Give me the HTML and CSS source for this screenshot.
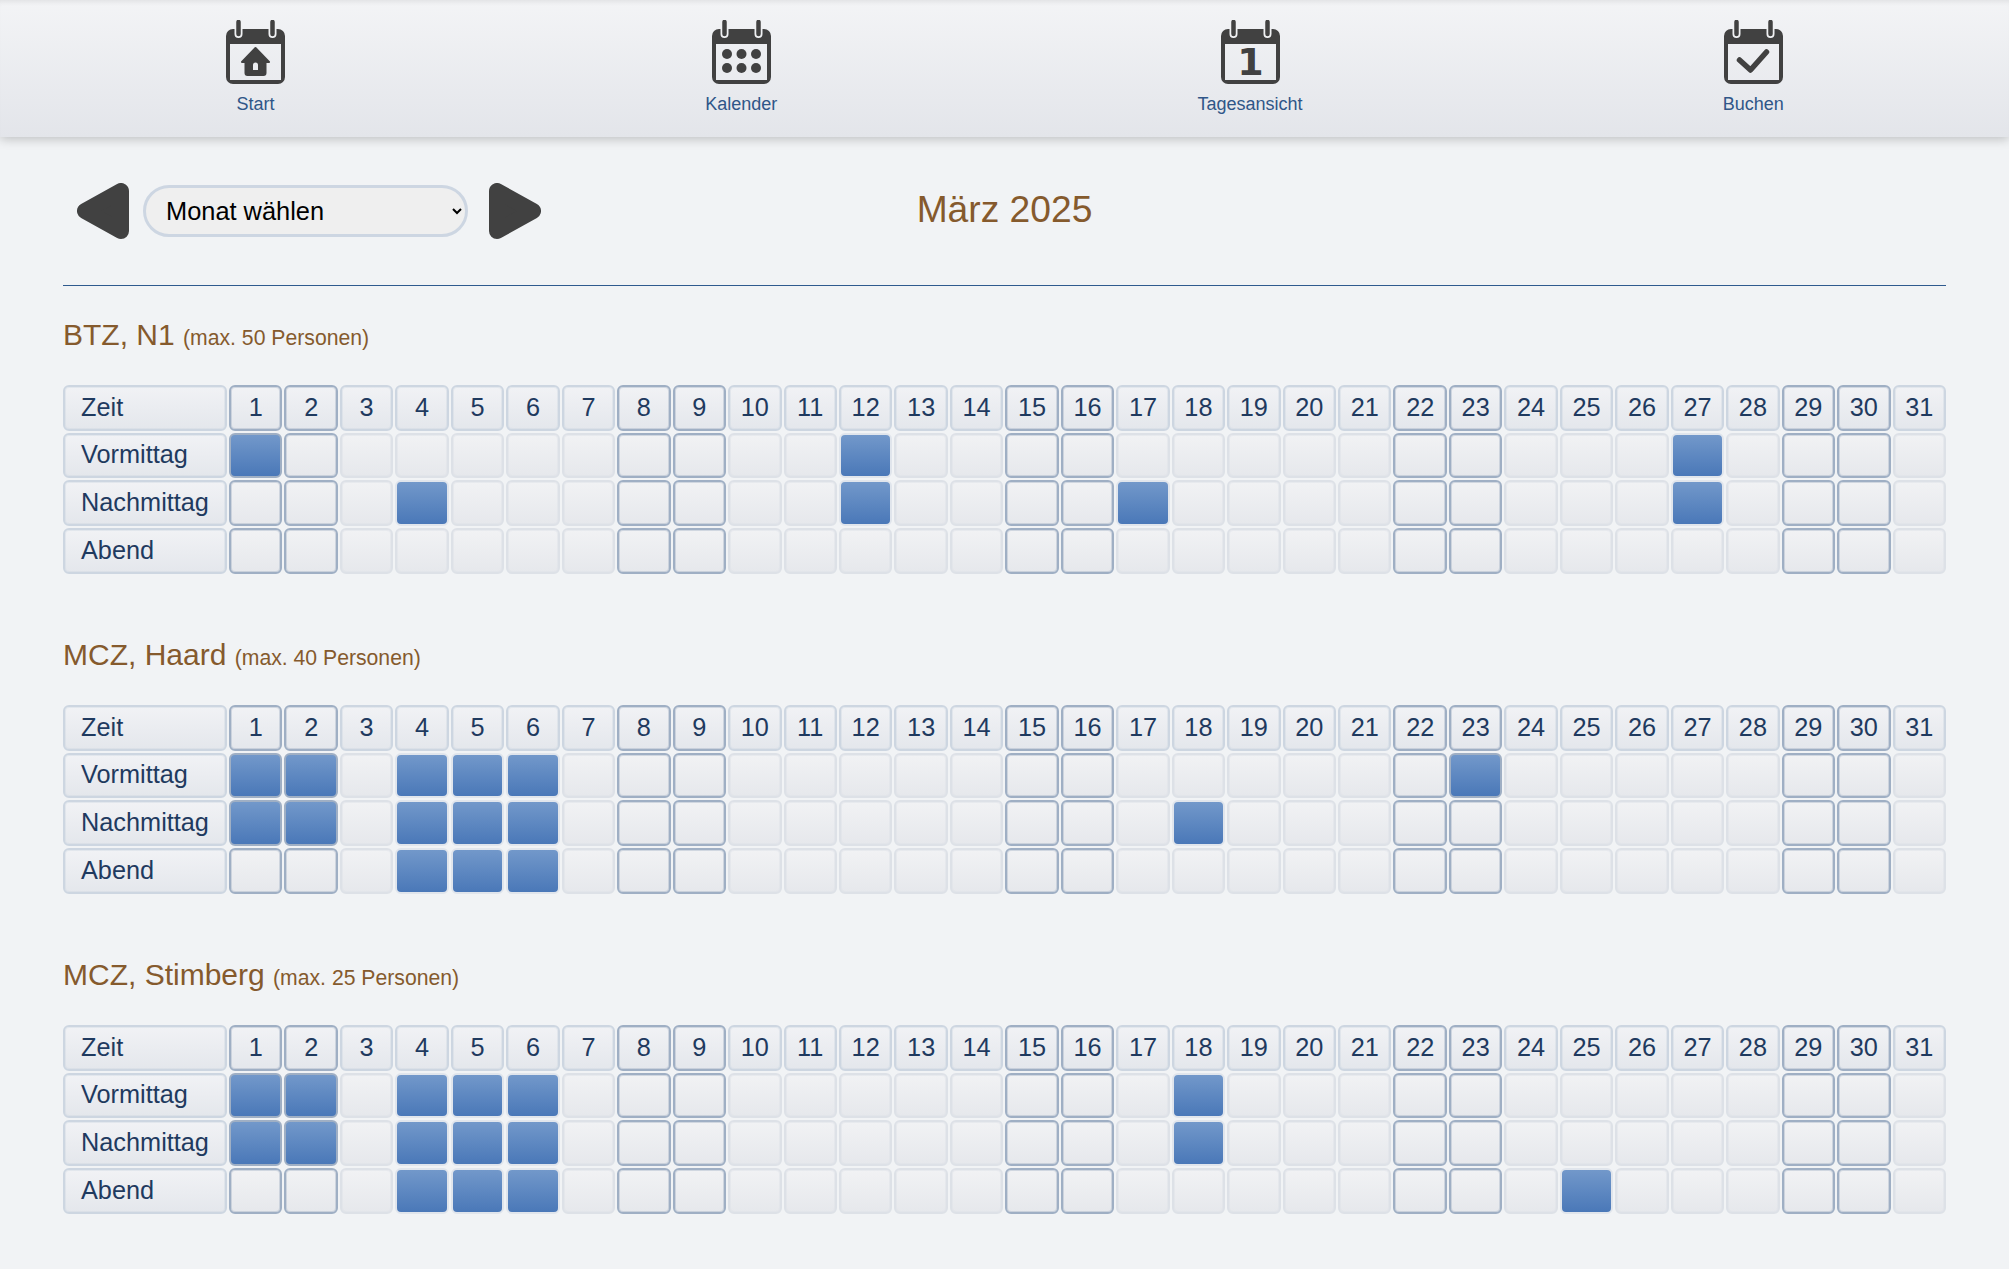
FILE: index.html
```html
<!DOCTYPE html>
<html lang="de">
<head>
<meta charset="UTF-8" />
<meta name="viewport" content="width=device-width, initial-scale=1" />
<title>Belegungsplan</title>
<link rel="stylesheet" href="styles.css">
</head>
<body>
  <svg class="sprite" width="0" height="0">
    <symbol id="cal" viewBox="0 0 59 64">
      <path fill-rule="evenodd" d="M7 9h45a7 7 0 0 1 7 7v41a7 7 0 0 1-7 7H7a7 7 0 0 1-7-7V16a7 7 0 0 1 7-7zM4 24v36h51V24z"/>
      <path class="ring" d="M12.5 2v12M46.5 2v12"/>
      <path class="ring-core" d="M12.5 2v12M46.5 2v12"/>
    </symbol>
  </svg>

  <nav class="topnav">
    <a class="navitem" href="#">
      <svg class="icon" viewBox="0 0 59 64">
        <use href="#cal"/>
        <path fill-rule="evenodd" stroke="#414141" stroke-width="2" stroke-linejoin="round" d="M29.5 28L43 42h-3.500v11a2 2 0 0 1-2 2h-16a2 2 0 0 1-2-2V42H16zM26 45v6h7v-6a3.500 3.500 0 0 0-7 0z"/>
      </svg>
      <span>Start</span>
    </a>
    <a class="navitem" href="#">
      <svg class="icon" viewBox="0 0 59 64">
        <use href="#cal"/>
        <circle cx="15" cy="34" r="5"/><circle cx="29.500" cy="34" r="5"/><circle cx="44" cy="34" r="5"/>
        <circle cx="15" cy="48" r="5"/><circle cx="29.500" cy="48" r="5"/><circle cx="44" cy="48" r="5"/>
      </svg>
      <span>Kalender</span>
    </a>
    <a class="navitem" href="#">
      <svg class="icon" viewBox="0 0 59 64">
        <use href="#cal"/>
        <text class="icon-digit" x="29.500" y="55" text-anchor="middle">1</text>
      </svg>
      <span>Tagesansicht</span>
    </a>
    <a class="navitem" href="#">
      <svg class="icon" viewBox="0 0 59 64">
        <use href="#cal"/>
        <path class="check" d="M15.500 40l11 10 16-18"/>
      </svg>
      <span>Buchen</span>
    </a>
  </nav>

  <main class="page">
    <div class="toolbar">
      <div class="monthpicker">
        <a href="#" class="arrow"><svg viewBox="0 0 52 56"><path d="M44 8v40L8 28z"/></svg></a>
        <select class="monthselect">
          <option>Monat wählen</option>
          <option>Januar 2025</option>
          <option>Februar 2025</option>
          <option>März 2025</option>
        </select>
        <a href="#" class="arrow"><svg viewBox="0 0 52 56"><path d="M8 8v40l36-20z"/></svg></a>
      </div>
      <h1 class="month">März 2025</h1>
    </div>

    <div id="rooms"></div>
  </main>

  <script src="script.js"></script>
</body>
</html>
```
FILE: styles.css
```css
* {
  box-sizing: border-box;
}
body {
  font-family: 'Liberation Sans', Arial, sans-serif;
  background: #f1f3f5;
  margin: 0;
  color: #1f3a5f;
}

.sprite {
  position: absolute;
}

.topnav {
  display: flex;
  justify-content: space-around;
  height: 137px;
  padding: 20px 15px 0 16px;
  background: linear-gradient(#f3f4f6, #e3e5ea);
  box-shadow: inset 0 5px 5px -3px rgba(0,0,0,0.08), 0 2px 10px rgba(0,0,0,0.22);
}

.navitem {
  display: flex;
  flex-direction: column;
  align-items: center;
  color: #2f5688;
  font-size: 18px;
  text-decoration: none;
}

.navitem span {
  margin-top: 10px;
}

.icon {
  width: 59px;
  height: 64px;
  fill: #414141;
}

.ring {
  fill: none;
  stroke: #f0f1f3;
  stroke-width: 8;
  stroke-linecap: round;
}

.ring-core {
  fill: none;
  stroke: #414141;
  stroke-width: 4.500;
  stroke-linecap: round;
}

.icon-digit {
  font-family: 'DejaVu Sans', sans-serif;
  font-weight: 700;
  font-size: 38px;
}

.check {
  fill: none;
  stroke: #414141;
  stroke-width: 5.500;
  stroke-linecap: round;
  stroke-linejoin: round;
}

.page {
  padding: 0 63px;
}

.toolbar {
  position: relative;
  display: flex;
  align-items: center;
  height: 149px;
  padding: 0 0 1px 14px;
  border-bottom: 1px solid #2f5a8e;
}

.monthpicker {
  display: flex;
  align-items: center;
  gap: 15px;
}

.arrow {
  display: block;
  width: 52px;
  height: 56px;
}

.arrow svg {
  display: block;
  width: 52px;
  height: 56px;
  fill: #414141;
  stroke: #414141;
  stroke-width: 16;
  stroke-linejoin: round;
}

.monthselect {
  width: 325px;
  height: 52px;
  margin: 0 6px 0 -1px;
  padding: 0 12px 0 16px;
  border: 3px solid #cdd6e2;
  border-radius: 26px;
  background: #efefef;
  color: #000;
  font-family: inherit;
  font-size: 25.400px;
}

.month {
  position: absolute;
  left: 0;
  right: 0;
  top: 51px;
  margin: 0;
  text-align: center;
  color: #855a2d;
  font-size: 37.200px;
  font-weight: 400;
  pointer-events: none;
}

.room {
  height: 320px;
}

.room-title {
  margin: 0;
  padding-top: 32px;
  height: 99px;
  color: #855a2d;
  font-size: 30px;
  font-weight: 400;
}

.room-title small {
  font-size: 21.200px;
}

.plan {
  display: grid;
  grid-template-columns: 164px repeat(31, 1fr);
  grid-auto-rows: 45.670px;
  gap: 2px;
  font-size: 25.300px;
}

.cell {
  display: flex;
  align-items: center;
  justify-content: center;
  padding-bottom: 1px;
  border: 2px solid #dde1e7;
  border-radius: 6px;
  background: linear-gradient(#f1f2f4, #e6e8ec);
  box-shadow: inset 0 0 0 1px rgba(221,225,231,0.5);
}

.head, .label {
  border-color: #cdd6e1;
  background: linear-gradient(#f1f2f5, #e4e7ec);
  box-shadow: inset 0 0 0 1px rgba(205,214,225,0.4);
}

.label {
  justify-content: flex-start;
  padding-left: 16px;
}

.weekend {
  border-color: #9fafc4;
  box-shadow: inset 0 0 0 1px rgba(159,175,196,0.4);
}

.booked {
  border-color: #e0e5ec;
  background: linear-gradient(#7298ca, #4a78b8);
  box-shadow: none;
}

.booked.weekend {
  border-color: #9fafc4;
}
```
FILE: script.js
```js
const rooms = [
  { name: 'BTZ, N1', max: 50, booked: [[1, 12, 27], [4, 12, 17, 27], []] },
  { name: 'MCZ, Haard', max: 40, booked: [[1, 2, 4, 5, 6, 23], [1, 2, 4, 5, 6, 18], [4, 5, 6]] },
  { name: 'MCZ, Stimberg', max: 25, booked: [[1, 2, 4, 5, 6, 18], [1, 2, 4, 5, 6, 18], [4, 5, 6, 25]] }
];
const slots = ['Vormittag', 'Nachmittag', 'Abend'];
const weekend = [1, 2, 8, 9, 15, 16, 22, 23, 29, 30];

function cell(cls, text) {
  return `<div class="cell ${cls}">${text}</div>`;
}

function dayClass(day) {
  return weekend.includes(day) ? 'weekend' : '';
}

let html = '';
rooms.forEach(function(room) {
  let rows = cell('head label', 'Zeit');
  for (let d = 1; d <= 31; d++) {
    rows += cell('head ' + dayClass(d), d);
  }
  slots.forEach(function(slot, i) {
    rows += cell('label', slot);
    for (let d = 1; d <= 31; d++) {
      rows += cell(dayClass(d) + (room.booked[i].includes(d) ? ' booked' : ''), '');
    }
  });
  html += `<section class="room">
    <h2 class="room-title">${room.name} <small>(max. ${room.max} Personen)</small></h2>
    <div class="plan">${rows}</div>
  </section>`;
});
document.getElementById('rooms').innerHTML = html;
```
